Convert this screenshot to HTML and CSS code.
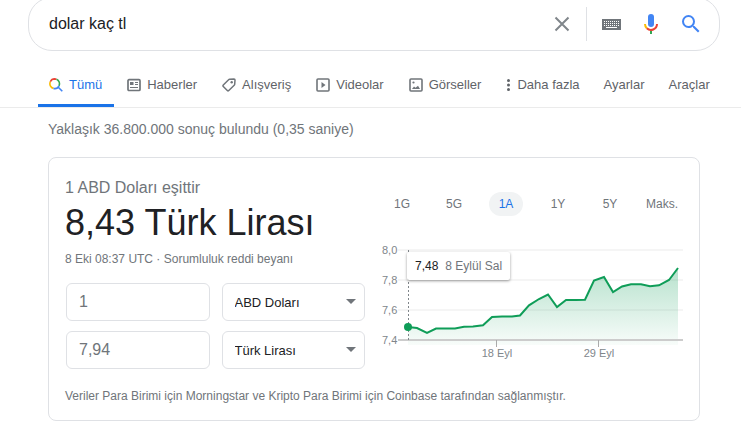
FILE: index.html
```html
<!DOCTYPE html>
<html lang="tr">
<head>
  <meta charset="UTF-8" />
  <meta name="viewport" content="width=device-width, initial-scale=1" />
  <title>dolar kaç tl</title>
  <link rel="stylesheet" href="styles.css">
</head>
<body>

  <form class="search-box">
    <input class="search-input" type="text" aria-label="Ara" value="dolar kaç tl" />
    <button class="icon-btn" type="reset" aria-label="Temizle">
      <svg width="16" height="16" viewBox="0 0 16 16"><path d="M1.500 1.500l13 13M14.500 1.500l-13 13" stroke="#80868b" stroke-width="2" fill="none"/></svg>
    </button>
    <span class="divider"></span>
    <button class="icon-btn" type="button" aria-label="Klavye">
      <svg width="19" height="11" viewBox="0 0 19 11">
        <rect width="19" height="11" fill="#70757a"/>
        <path d="M2 2.500h15M2 4.500h15M2 6.500h15" stroke="#fff" stroke-width="1" stroke-dasharray="1 1"/>
        <path d="M4 8.500h11" stroke="#fff" stroke-width="1"/>
      </svg>
    </button>
    <button class="icon-btn" type="button" aria-label="Sesle arama">
      <svg width="24" height="24" viewBox="0 0 24 24">
        <rect x="9" y="2" width="6" height="13" rx="3" fill="#4285f4"/>
        <path fill="#34a853" d="M11 18h2v4h-2z"/>
        <g fill="none" stroke-width="2">
          <path stroke="#fbbc04" d="M6 12a6 6 0 0 0 1.800 4.200"/>
          <path stroke="#ea4335" d="M7.800 16.200A6 6 0 0 0 18 12"/>
        </g>
      </svg>
    </button>
    <button class="icon-btn" type="submit" aria-label="Google'da Ara">
      <svg width="24" height="24" viewBox="0 0 24 24"><path fill="#4285f4" d="M15.500 14h-.790l-.280-.270A6.471 6.471 0 0 0 16 9.500 6.500 6.500 0 1 0 9.500 16c1.610 0 3.090-.590 4.230-1.570l.270.280v.790l5 4.990L20.490 19l-4.990-5zm-6 0C7.010 14 5 11.990 5 9.500S7.010 5 9.500 5 14 7.010 14 9.500 11.990 14 9.500 14z"/></svg>
    </button>
  </form>

  <nav class="tabs">
    <a class="tab active" href="#">
      <svg width="14" height="14" viewBox="0 0 14 14" fill="none" stroke-width="1.600">
        <path d="M1.300 3.800A4.800 4.800 0 0 1 5.700 .9L7.500 1.200" stroke="#ea4335"/>
        <path d="M7.500 1.200A4.800 4.800 0 0 1 10 7.800" stroke="#34a853"/>
        <path d="M1.300 3.800A4.800 4.800 0 0 0 4.500 10.400" stroke="#fbbc04"/>
        <path d="M4.500 10.400A4.800 4.800 0 0 0 10 7.800M9 9l4.300 4.300" stroke="#4285f4"/>
      </svg>
      Tümü
    </a>
    <a class="tab" href="#">
      <svg width="14" height="14" viewBox="0 0 14 14" fill="none" stroke="#70757a">
        <rect x="1" y="1.700" width="12" height="10.800" rx="1" stroke-width="1.700"/>
        <path d="M3 5.500h3.500" stroke-width="3"/>
        <path d="M8 4.500h3M8 6.500h3M3 9.500h8" stroke-width="1.200"/>
      </svg>
      Haberler
    </a>
    <a class="tab" href="#">
      <svg width="14" height="14" viewBox="0 0 14 14" fill="none" stroke="#70757a">
        <path d="M7.600 1.300L12 1q1 0 1 1l-.3 4.300q0 .5-.5 1L6.800 12.500q-.8.700-1.500 0L1.300 8.500q-.7-.7 0-1.500L6.600 1.800q.4-.4 1-.5z" stroke-width="1.500"/>
        <circle cx="9.700" cy="4.300" r="1.200" fill="#70757a" stroke="none"/>
      </svg>
      Alışveriş
    </a>
    <a class="tab" href="#">
      <svg width="14" height="14" viewBox="0 0 14 14" fill="none" stroke="#70757a">
        <rect x="1" y="1" width="12" height="12" rx="1" stroke-width="1.600"/>
        <path d="M5.500 4v6l4-3z" fill="#70757a" stroke="none"/>
      </svg>
      Videolar
    </a>
    <a class="tab" href="#">
      <svg width="14" height="14" viewBox="0 0 14 14" fill="none" stroke="#70757a">
        <rect x="1" y="1" width="12" height="12" rx="1" stroke-width="1.600"/>
        <path d="M3 11l2-2.500 1.500 1.300L9 7.800 11 11z" fill="#70757a" stroke="none"/>
        <circle cx="4.500" cy="4.500" r="1.100" fill="#70757a" stroke="none"/>
      </svg>
      Görseller
    </a>
    <a class="tab" href="#">
      <svg width="5" height="14" viewBox="0 0 5 14" fill="#5f6368">
        <circle cx="2.500" cy="2.500" r="1.500"/><circle cx="2.500" cy="7" r="1.500"/><circle cx="2.500" cy="11.500" r="1.500"/>
      </svg>
      Daha fazla
    </a>
    <a class="tab tool" href="#">Ayarlar</a>
    <a class="tab tool" href="#">Araçlar</a>
  </nav>

  <main>
    <p class="stats">Yaklaşık 36.800.000 sonuç bulundu (0,35 saniye)</p>

    <section class="card">
      <div class="columns">
        <div class="converter">
          <div class="from">1 ABD Doları eşittir</div>
          <div class="result">8,43 Türk Lirası</div>
          <div class="updated">8 Eki 08:37 UTC · <a href="#">Sorumluluk reddi beyanı</a></div>

          <form class="fields">
            <input type="text" aria-label="Dolar tutarı" value="1" />
            <div class="select">
              <select aria-label="Kaynak para birimi"><option>ABD Doları</option></select>
            </div>
            <input type="text" aria-label="Lira tutarı" value="7,94" />
            <div class="select">
              <select aria-label="Hedef para birimi"><option>Türk Lirası</option></select>
            </div>
          </form>
        </div>

        <div class="history">
          <div class="ranges">
            <button type="button">1G</button>
            <button type="button">5G</button>
            <button type="button" class="selected">1A</button>
            <button type="button">1Y</button>
            <button type="button">5Y</button>
            <button type="button">Maks.</button>
          </div>

          <div class="chart">
            <svg viewBox="0 0 312 122">
              <defs>
                <linearGradient id="fill" x1="0" y1="0" x2="0" y2="1">
                  <stop offset="0" stop-color="#0f9d58" stop-opacity="0.3"/>
                  <stop offset="1" stop-color="#0f9d58" stop-opacity="0.03"/>
                </linearGradient>
              </defs>
              <path class="grid" d="M22 10h285M22 40h285M22 70h285"/>
              <path fill="url(#fill)" d="M32 87L41 88 51 93 60 88.500H79L88 86.700 97 86.500 107 85.300 116 77 126 76.500H136L144 75.500 153 65.300 163 59 172 54.500 181 67 190 60H200L209 59.700 218 40.500 228 37 237 52 246 46.500 255 44.300H265L274 46.300 283 45.300 293 40 302 28V105H32z"/>
              <path class="axis" d="M22 100h285"/>
              <path class="tick" d="M120.500 100v7M222.500 100v7"/>
              <path class="cursor" d="M32.500 10v90"/>
              <path class="line" d="M32 87L41 88 51 93 60 88.500H79L88 86.700 97 86.500 107 85.300 116 77 126 76.500H136L144 75.500 153 65.300 163 59 172 54.500 181 67 190 60H200L209 59.700 218 40.500 228 37 237 52 246 46.500 255 44.300H265L274 46.300 283 45.300 293 40 302 28"/>
              <circle cx="32" cy="87" r="4" fill="#0f9d58"/>
              <g class="labels">
                <text x="6" y="14">8,0</text>
                <text x="6" y="44">7,8</text>
                <text x="6" y="74">7,6</text>
                <text x="6" y="104">7,4</text>
                <text x="121" y="117" text-anchor="middle">18 Eyl</text>
                <text x="223" y="117" text-anchor="middle">29 Eyl</text>
              </g>
            </svg>
            <div class="tooltip"><b>7,48</b>8 Eylül Sal</div>
          </div>
        </div>
      </div>

      <p class="source">Veriler Para Birimi için Morningstar ve Kripto Para Birimi için Coinbase tarafından sağlanmıştır.</p>
    </section>
  </main>

</body>
</html>
```
FILE: styles.css
```css
* {
  box-sizing: border-box;
}
body {
  margin: 0;
  font-family: Arial, "Liberation Sans", sans-serif;
  color: #202124;
  background: #fff;
}
a {
  color: inherit;
  text-decoration: none;
}
button, input, select {
  font-family: inherit;
}

/* search */
.search-box {
  display: flex;
  align-items: center;
  height: 54px;
  margin: -3px 21px 0 28px;
  padding: 0 8px 0 20px;
  border: 1px solid #dfe1e5;
  border-radius: 24px;
}
.search-input {
  flex: 1;
  min-width: 0;
  padding: 0;
  border: 0;
  outline: 0;
  font-size: 16px;
  color: #202124;
}
.icon-btn {
  display: flex;
  align-items: center;
  justify-content: center;
  width: 40px;
  height: 40px;
  padding: 0;
  border: 0;
  background: none;
}
.divider {
  width: 1px;
  height: 34px;
  margin: 0 4px;
  background: #dfe1e5;
}

/* tabs */
.tabs {
  display: flex;
  gap: 2px;
  margin-top: 11px;
  padding-left: 38px;
  border-bottom: 1px solid #ebebeb;
}
.tab {
  display: flex;
  align-items: center;
  gap: 6px;
  height: 45px;
  padding: 3px 12px 0 11px;
  border-bottom: 3px solid transparent;
  font-size: 13px;
  white-space: nowrap;
  color: #5f6368;
}
.tab.active {
  color: #1a73e8;
  border-bottom-color: #1a73e8;
}
.tab.tool {
  padding-left: 10px;
}

main {
  margin: 0 41px 0 48px;
}
.stats {
  margin: 0;
  padding: 11px 0 18px;
  font-size: 14px;
  line-height: 20px;
  color: #70757a;
}

/* currency card */
.card {
  padding: 20px 11px 14px 16px;
  border: 1px solid #dfe1e5;
  border-radius: 8px;
}
.columns {
  display: flex;
  gap: 11px;
}
.converter {
  width: 300px;
}
.from {
  font-size: 16px;
  line-height: 20px;
  color: #70757a;
}
.result {
  font-size: 36px;
  line-height: 50px;
}
.updated {
  font-size: 12px;
  line-height: 22px;
  color: #70757a;
}
.fields {
  display: grid;
  grid-template-columns: 1fr 1fr;
  gap: 10px 12px;
  margin-top: 13px;
  padding-left: 1px;
}
.fields input, .fields select {
  display: block;
  width: 100%;
  height: 38px;
  padding: 0 12px;
  border: 1px solid #dfe1e5;
  border-radius: 6px;
  background: #fff;
}
.fields input {
  font-size: 16px;
  color: #70757a;
}
.fields select {
  appearance: none;
  font-size: 13px;
  color: #202124;
}
.select {
  position: relative;
}
.select::after {
  content: "";
  position: absolute;
  top: 16px;
  right: 9px;
  border: 5px solid transparent;
  border-top-color: #70757a;
  border-bottom: 0;
  pointer-events: none;
}

/* history */
.history {
  flex: 1;
  min-width: 0;
  padding-top: 14px;
}
.ranges {
  display: grid;
  grid-template-columns: repeat(6, 1fr);
  justify-items: center;
}
.ranges button {
  min-width: 34px;
  height: 24px;
  padding: 0;
  border: 0;
  border-radius: 12px;
  background: none;
  font-size: 12px;
  color: #70757a;
}
.ranges .selected {
  background: #f1f3f4;
  color: #1a73e8;
}
.chart {
  position: relative;
  margin-top: 24px;
}
.chart svg {
  display: block;
  width: 100%;
}
.grid {
  stroke: #f5f5f5;
  stroke-width: 2;
}
.axis {
  stroke: #ccc;
  stroke-width: 2;
}
.tick {
  stroke: #aaa;
}
.cursor {
  stroke: #80868b;
  stroke-dasharray: 2 2;
}
.line {
  fill: none;
  stroke: #0f9d58;
  stroke-width: 2;
}
.labels {
  font-size: 11px;
  fill: #80868b;
}
.tooltip {
  position: absolute;
  top: 12px;
  left: 31px;
  padding: 0 8px;
  border-radius: 2px;
  background: #fff;
  box-shadow: 0 1px 3px rgba(0, 0, 0, 0.4);
  font-size: 12px;
  line-height: 28px;
  color: #70757a;
}
.tooltip b {
  margin-right: 7px;
  font-weight: normal;
  color: #202124;
}
.source {
  margin: 17px 0 0;
  font-size: 12px;
  line-height: 20px;
  color: #70757a;
}
```
